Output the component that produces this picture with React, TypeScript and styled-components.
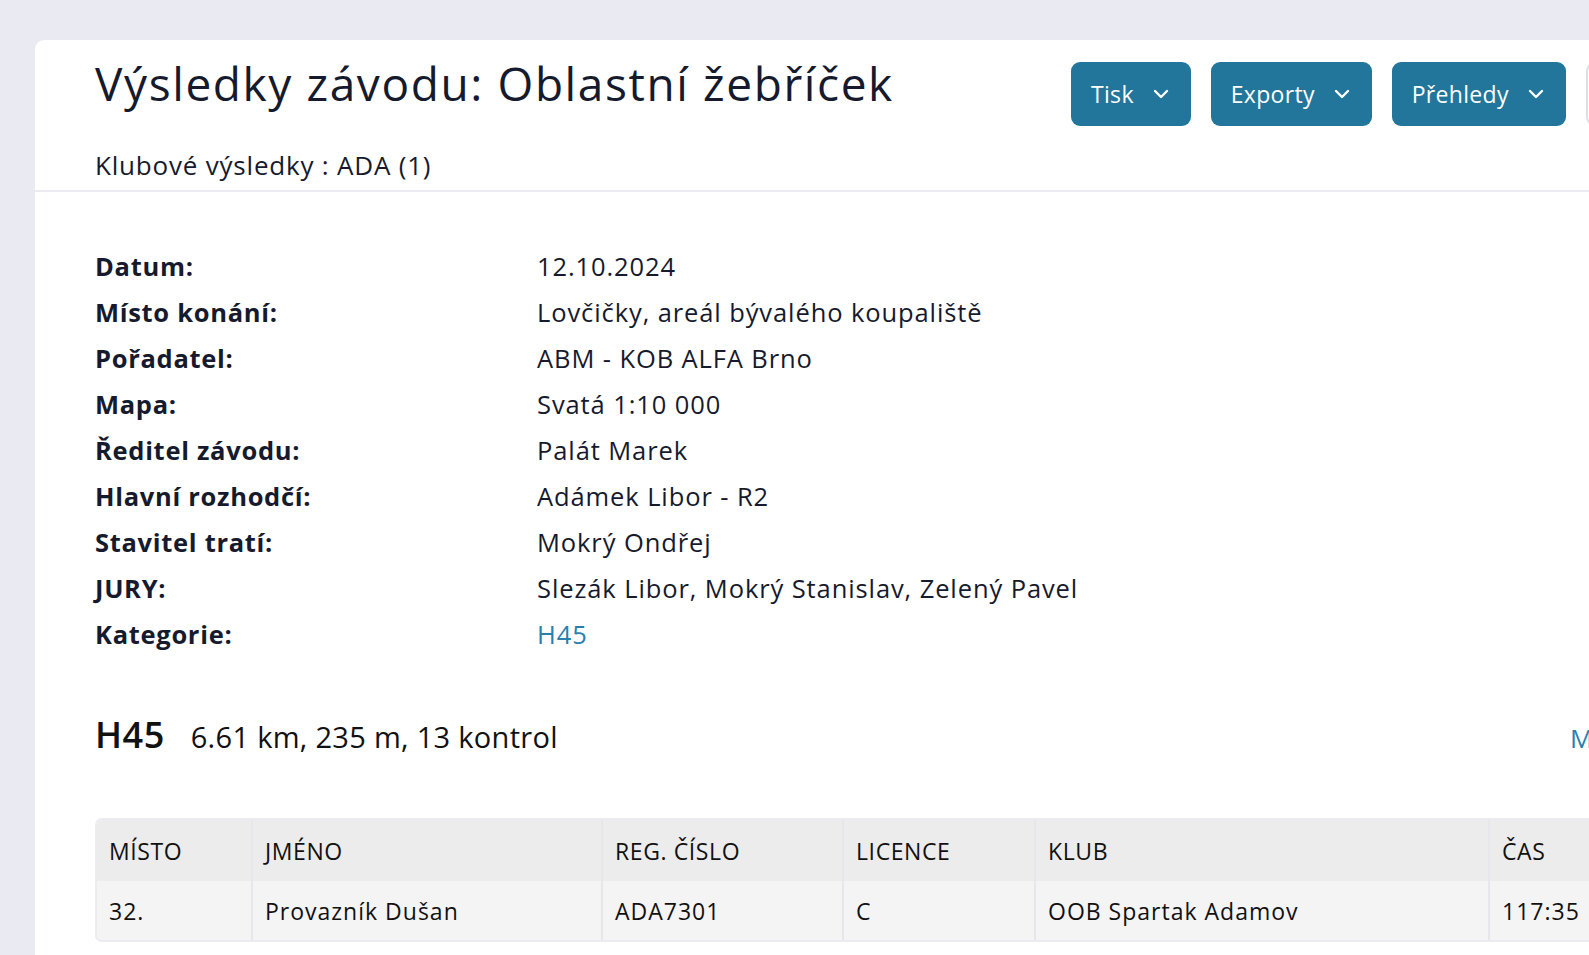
import React from "react";
import styled, { createGlobalStyle } from "styled-components";
import { ChevronDown } from "lucide-react";

const Global = createGlobalStyle`
  html, body { margin: 0; padding: 0; overflow: hidden; }
  body {
    background: #eaeaf3;
    font-family: "Open Sans", "Noto Sans", sans-serif;
    color: #161a2d;
  }
`;

const Page = styled.div`
  padding: 40px 0 0 35px;
  width: 1700px;
`;

const Card = styled.div`
  background: #ffffff;
  border-top-left-radius: 9px;
  min-height: 915px;
`;

const Header = styled.div`
  display: flex;
  justify-content: space-between;
  align-items: flex-start;
  padding: 12px 0 8px 60px;
  border-bottom: 2px solid #ebebf1;
  width: 1539px;
`;

const TitleBlock = styled.div`
  display: flex;
  flex-direction: column;
`;

const Title = styled.h1`
  margin: 0;
  font-size: 46px;
  font-weight: 500;
  line-height: 62px;
  letter-spacing: 1.6px;
`;

const Subtitle = styled.div`
  margin-top: 34px;
  font-size: 26px;
  line-height: 34px;
  font-weight: 400;
  letter-spacing: 0.8px;
`;

const Actions = styled.div`
  display: flex;
  gap: 20px;
  margin-top: 10px;
`;

const DropButton = styled.button<{ $ghost?: boolean }>`
  display: flex;
  align-items: center;
  gap: 15px;
  height: 64px;
  padding: 0 18px 0 20px;
  border-radius: 9px;
  border: ${(p) => (p.$ghost ? "2px solid #dedee6" : "none")};
  background: ${(p) => (p.$ghost ? "#ffffff" : "#22769b")};
  color: #ffffff;
  font-family: inherit;
  font-size: 23px;
  font-weight: 400;
  letter-spacing: 0.3px;
  cursor: pointer;
`;

const Body = styled.div`
  padding: 51px 0 0 60px;
`;

const InfoGrid = styled.dl`
  display: grid;
  grid-template-columns: 442px 1fr;
  margin: 0;
  font-size: 25.5px;
  line-height: 46px;
  letter-spacing: 0.9px;
`;

const Label = styled.dt`
  font-weight: 700;
  letter-spacing: 0.7px;
`;

const Value = styled.dd`
  margin: 0;
  font-weight: 400;
`;

const Link = styled.a`
  color: #2a80ad;
  text-decoration: none;
`;

const CourseBar = styled.div`
  display: flex;
  align-items: baseline;
  justify-content: space-between;
  margin-top: 53px;
  width: 1584px;
`;

const CourseTitle = styled.div`
  display: flex;
  align-items: baseline;
  gap: 26px;
`;

const Cat = styled.span`
  font-size: 36px;
  font-weight: 600;
  color: #111;
  letter-spacing: 0.5px;
`;

const CourseInfo = styled.span`
  font-size: 29px;
  font-weight: 400;
  color: #111;
  letter-spacing: 0.3px;
`;

const MoreLink = styled.a`
  font-size: 26px;
  color: #2a80ad;
  text-decoration: none;
`;

const TableWrap = styled.div`
  margin-top: 59px;
  border: 2px solid #ebebf0;
  border-right: none;
  border-radius: 7px 0 0 7px;
  overflow: hidden;
  width: 1500px;
`;

const Table = styled.table`
  border-collapse: collapse;
  table-layout: fixed;
  width: 100%;
  font-size: 23px;
  color: #111;
  letter-spacing: 1px;
`;

const Th = styled.th`
  background: #ececed;
  text-align: left;
  font-weight: 500;
  text-transform: uppercase;
  letter-spacing: 0.6px;
  height: 61px;
  padding: 0 12px;
  border-left: 2px solid #e6e6eb;
  &:first-child { border-left: none; }
`;

const Td = styled.td`
  background: #f4f4f5;
  height: 59px;
  padding: 0 12px;
  border-left: 2px solid #e6e6eb;
  &:first-child { border-left: none; }
`;

const info: [string, string][] = [
  ["Datum:", "12.10.2024"],
  ["Místo konání:", "Lovčičky, areál bývalého koupaliště"],
  ["Pořadatel:", "ABM - KOB ALFA Brno"],
  ["Mapa:", "Svatá 1:10 000"],
  ["Ředitel závodu:", "Palát Marek"],
  ["Hlavní rozhodčí:", "Adámek Libor - R2"],
  ["Stavitel tratí:", "Mokrý Ondřej"],
  ["JURY:", "Slezák Libor, Mokrý Stanislav, Zelený Pavel"],
];

const cols = [
  { name: "Místo", w: 155 },
  { name: "Jméno", w: 350 },
  { name: "Reg. číslo", w: 241 },
  { name: "Licence", w: 192 },
  { name: "Klub", w: 454 },
  { name: "Čas", w: 106 },
];

export default function App() {
  return (
    <>
      <Global />
      <Page>
        <Card>
          <Header>
            <TitleBlock>
              <Title>Výsledky závodu: Oblastní žebříček</Title>
              <Subtitle>Klubové výsledky : ADA (1)</Subtitle>
            </TitleBlock>
            <Actions>
              <DropButton>
                Tisk <ChevronDown size={24} strokeWidth={2.4} />
              </DropButton>
              <DropButton>
                Exporty <ChevronDown size={24} strokeWidth={2.4} />
              </DropButton>
              <DropButton>
                Přehledy <ChevronDown size={24} strokeWidth={2.4} />
              </DropButton>
              <DropButton $ghost>&nbsp;</DropButton>
            </Actions>
          </Header>
          <Body>
            <InfoGrid>
              {info.map(([l, v]) => (
                <React.Fragment key={l}>
                  <Label>{l}</Label>
                  <Value>{v}</Value>
                </React.Fragment>
              ))}
              <Label>Kategorie:</Label>
              <Value>
                <Link href="#">H45</Link>
              </Value>
            </InfoGrid>
            <CourseBar>
              <CourseTitle>
                <Cat>H45</Cat>
                <CourseInfo>6.61 km, 235 m, 13 kontrol</CourseInfo>
              </CourseTitle>
              <MoreLink href="#">Mezičasy</MoreLink>
            </CourseBar>
            <TableWrap>
              <Table>
                <colgroup>
                  {cols.map((c) => (
                    <col key={c.name} style={{ width: c.w }} />
                  ))}
                  <col />
                </colgroup>
                <thead>
                  <tr>
                    {cols.map((c) => (
                      <Th key={c.name}>{c.name}</Th>
                    ))}
                    <Th>Body</Th>
                  </tr>
                </thead>
                <tbody>
                  <tr>
                    <Td>32.</Td>
                    <Td>Provazník Dušan</Td>
                    <Td>ADA7301</Td>
                    <Td>C</Td>
                    <Td>OOB Spartak Adamov</Td>
                    <Td>117:35</Td>
                    <Td>0</Td>
                  </tr>
                </tbody>
              </Table>
            </TableWrap>
          </Body>
        </Card>
      </Page>
    </>
  );
}
